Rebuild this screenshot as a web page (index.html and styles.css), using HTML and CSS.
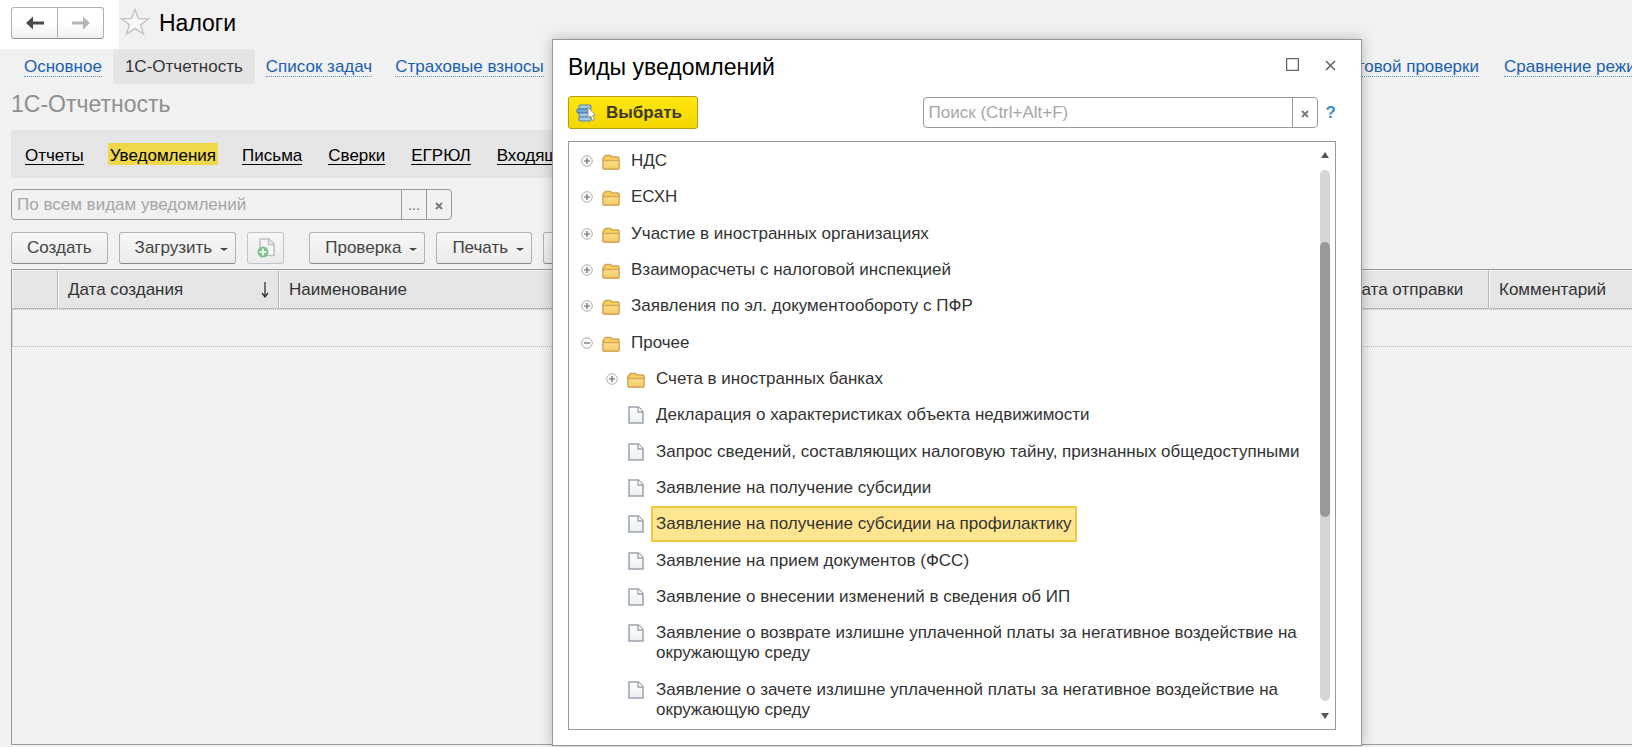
FILE: index.html
```html
<!DOCTYPE html>
<html lang="ru">
    <head>
        <meta charset="UTF-8" />
        <title>Налоги</title>
        <link rel="stylesheet" href="styles.css">
    </head>
    <body>
        <!-- icons -->
        <svg class="sprite" width="0" height="0">
            <defs>
                <linearGradient id="folderFill" x1="0" y1="0" x2="0" y2="1">
                    <stop offset="0" stop-color="#fbe08a" />
                    <stop offset="1" stop-color="#f3cb68" />
                </linearGradient>
                <linearGradient id="fileFill" x1="0" y1="0" x2="0" y2="1">
                    <stop offset="0" stop-color="#ffffff" />
                    <stop offset="1" stop-color="#eceef0" />
                </linearGradient>
            </defs>
            <symbol id="folder" viewBox="0 0 18 16">
                <path d="M1 14V4.500L3.500 1.500H8.500L10 3H16a1 1 0 0 1 1 1V14a1 1 0 0 1-1 1H2a1 1 0 0 1-1-1z" fill="#f8d25c" stroke="#d3a455" stroke-width="1.500" />
                <path d="M1 6.500H17V14a1 1 0 0 1-1 1H2a1 1 0 0 1-1-1z" fill="url(#folderFill)" stroke="#d9a95c" stroke-width="1.300" />
            </symbol>
            <symbol id="file" viewBox="0 0 16 18">
                <path d="M1 1H10.500L15 5.500V17H1z" fill="url(#fileFill)" stroke="#9ba3ad" stroke-width="1.500" />
                <path d="M10 1V6H15" fill="#fff" stroke="#9ba3ad" stroke-width="1.300" />
            </symbol>
            <symbol id="plus" viewBox="0 0 12 12">
                <circle cx="6" cy="6" r="5.300" fill="#fafafa" stroke="#b0b0b0" />
                <path d="M3 6H9M6 3V9" stroke="#666" stroke-width="1.200" />
            </symbol>
            <symbol id="minus" viewBox="0 0 12 12">
                <circle cx="6" cy="6" r="5.300" fill="#fafafa" stroke="#b0b0b0" />
                <path d="M3 6H9" stroke="#666" stroke-width="1.200" />
            </symbol>
            <symbol id="cross" viewBox="0 0 8 8">
                <path d="M1 1L7 7M7 1L1 7" stroke="#777" stroke-width="1.800" />
            </symbol>
        </svg>

        <div class="page">
            <header class="top">
                <div class="history">
                    <button class="history-btn" aria-label="Назад">
                        <svg width="18" height="14" viewBox="0 0 18 14"><path d="M0 7L7 0.500V5.500H18V8.500H7V13.500z" fill="#4a4a4a" /></svg>
                    </button>
                    <button class="history-btn" aria-label="Вперед">
                        <svg width="18" height="14" viewBox="0 0 18 14"><path d="M18 7L11 0.500V5.500H0V8.500H11V13.500z" fill="#b5b5b5" /></svg>
                    </button>
                </div>
                <svg class="star" width="30" height="28" viewBox="0 0 30 28">
                    <path d="M15 1.500L18.400 10.500L28.500 10.800L20.500 16.800L23.500 26L15 20.500L6.500 26L9.500 16.800L1.500 10.800L11.600 10.500z" fill="#f8f8f8" stroke="#c3c6ca" stroke-width="1.500" />
                </svg>
                <h1 class="title">Налоги</h1>
            </header>

            <nav class="sections">
                <a href="#" class="section">Основное</a>
                <a href="#" class="section active">1С-Отчетность</a>
                <a href="#" class="section">Список задач</a>
                <a href="#" class="section">Страховые взносы</a>
                <a href="#" class="section push">Риски налоговой проверки</a>
                <a href="#" class="section last">Сравнение режимов</a>
            </nav>

            <main class="content">
                <h2 class="subtitle">1С-Отчетность</h2>

                <nav class="tabs">
                    <a href="#" class="tab">Отчеты</a>
                    <a href="#" class="tab active">Уведомления</a>
                    <a href="#" class="tab">Письма</a>
                    <a href="#" class="tab">Сверки</a>
                    <a href="#" class="tab">ЕГРЮЛ</a>
                    <a href="#" class="tab">Входящие</a>
                </nav>

                <div class="field filter">
                    <input type="text" placeholder="По всем видам уведомлений" aria-label="Вид уведомления" />
                    <button aria-label="Выбрать вид">...</button>
                    <button aria-label="Очистить"><svg width="8" height="8"><use href="#cross" /></svg></button>
                </div>

                <div class="toolbar">
                    <button class="btn">Создать</button>
                    <button class="btn drop">Загрузить</button>
                    <button class="btn icon" aria-label="Добавить файл">
                        <svg width="18" height="20" viewBox="0 0 18 20">
                            <path d="M3 1H12L17 6V17.500H3z" fill="#f4f5f7" stroke="#b9c0c9" stroke-width="1.500" />
                            <path d="M11.500 1V6.500H17" fill="none" stroke="#b9c0c9" stroke-width="1.300" />
                            <circle cx="6" cy="14" r="5.500" fill="#82c28a" />
                            <path d="M2.500 14H9.500M6 10.500V17.500" stroke="#fff" stroke-width="1.600" />
                        </svg>
                    </button>
                    <button class="btn drop gap">Проверка</button>
                    <button class="btn drop">Печать</button>
                    <button class="btn">Еще</button>
                </div>

                <div class="grid">
                    <table class="list">
                        <thead>
                            <tr>
                                <th class="col-mark"></th>
                                <th class="col-date"><div class="sort">Дата создания
                                    <svg width="8" height="16" viewBox="0 0 8 16"><path d="M4 0V14M1 11L4 15L7 11" fill="none" stroke="#333" stroke-width="1.300" /></svg>
                                </div></th>
                                <th>Наименование</th>
                                <th class="col-sent">Дата отправки</th>
                                <th class="col-comment">Комментарий</th>
                            </tr>
                        </thead>
                        <tbody>
                            <tr><td colspan="5"></td></tr>
                        </tbody>
                    </table>
                </div>
            </main>
        </div>

        <section class="dialog" role="dialog" aria-labelledby="dialogTitle">
            <div class="dialog-head">
                <h2 class="title" id="dialogTitle">Виды уведомлений</h2>
                <div class="window-btns">
                    <button aria-label="Развернуть"><svg width="13" height="13" viewBox="0 0 13 13"><rect x="0.500" y="0.500" width="12" height="12" fill="none" stroke="#666" stroke-width="1.500" /></svg></button>
                    <button aria-label="Закрыть"><svg width="11" height="11" viewBox="0 0 11 11"><path d="M1 1L10 10M10 1L1 10" stroke="#666" stroke-width="1.600" /></svg></button>
                </div>
            </div>

            <div class="dialog-bar">
                <button class="btn choose">
                    <svg width="20" height="18" viewBox="0 0 20 18">
                        <rect x="3" y="1" width="12" height="4" rx="1" fill="#a9cbe8" stroke="#4f83b3" />
                        <rect x="1" y="5" width="14" height="4" rx="1" fill="#6fa6d6" stroke="#3f76ab" />
                        <rect x="3" y="9" width="12" height="4" rx="1" fill="#a9cbe8" stroke="#4f83b3" />
                        <rect x="3" y="13" width="12" height="4" rx="1" fill="#a9cbe8" stroke="#4f83b3" />
                        <path d="M12 3V14L14.500 12L16.500 16.500L18.500 15.500L16.500 11.500H19.500z" fill="#fff" stroke="#8a8a70" stroke-width="0.800" />
                    </svg>
                    Выбрать
                </button>
                <div class="field search">
                    <input type="text" placeholder="Поиск (Ctrl+Alt+F)" aria-label="Поиск" />
                    <button aria-label="Очистить поиск"><svg width="8" height="8"><use href="#cross" /></svg></button>
                </div>
                <a href="#" class="help">?</a>
            </div>

            <div class="tree">
                <ul class="nodes">
                    <li><div class="node"><svg class="toggle"><use href="#plus" /></svg><svg class="folder"><use href="#folder" /></svg><span class="label">НДС</span></div></li>
                    <li><div class="node"><svg class="toggle"><use href="#plus" /></svg><svg class="folder"><use href="#folder" /></svg><span class="label">ЕСХН</span></div></li>
                    <li><div class="node"><svg class="toggle"><use href="#plus" /></svg><svg class="folder"><use href="#folder" /></svg><span class="label">Участие в иностранных организациях</span></div></li>
                    <li><div class="node"><svg class="toggle"><use href="#plus" /></svg><svg class="folder"><use href="#folder" /></svg><span class="label">Взаиморасчеты с налоговой инспекцией</span></div></li>
                    <li><div class="node"><svg class="toggle"><use href="#plus" /></svg><svg class="folder"><use href="#folder" /></svg><span class="label">Заявления по эл. документообороту с ПФР</span></div></li>
                    <li>
                        <div class="node"><svg class="toggle"><use href="#minus" /></svg><svg class="folder"><use href="#folder" /></svg><span class="label">Прочее</span></div>
                        <ul class="children">
                            <li><div class="node"><svg class="toggle"><use href="#plus" /></svg><svg class="folder"><use href="#folder" /></svg><span class="label">Счета в иностранных банках</span></div></li>
                            <li><div class="node leaf"><svg class="file"><use href="#file" /></svg><span class="label">Декларация о характеристиках объекта недвижимости</span></div></li>
                            <li><div class="node leaf"><svg class="file"><use href="#file" /></svg><span class="label">Запрос сведений, составляющих налоговую тайну, признанных общедоступными</span></div></li>
                            <li><div class="node leaf"><svg class="file"><use href="#file" /></svg><span class="label">Заявление на получение субсидии</span></div></li>
                            <li><div class="node leaf selected"><svg class="file"><use href="#file" /></svg><span class="label">Заявление на получение субсидии на профилактику</span></div></li>
                            <li><div class="node leaf"><svg class="file"><use href="#file" /></svg><span class="label">Заявление на прием документов (ФСС)</span></div></li>
                            <li><div class="node leaf"><svg class="file"><use href="#file" /></svg><span class="label">Заявление о внесении изменений в сведения об ИП</span></div></li>
                            <li><div class="node leaf"><svg class="file"><use href="#file" /></svg><span class="label">Заявление о возврате излишне уплаченной платы за негативное воздействие на окружающую среду</span></div></li>
                            <li><div class="node leaf"><svg class="file"><use href="#file" /></svg><span class="label">Заявление о зачете излишне уплаченной платы за негативное воздействие на окружающую среду</span></div></li>
                        </ul>
                    </li>
                </ul>
                <div class="scroll">
                    <svg width="8" height="6" viewBox="0 0 8 6"><path d="M4 0L8 6H0z" fill="#555" /></svg>
                    <div class="track"><div class="thumb"></div></div>
                    <svg width="8" height="6" viewBox="0 0 8 6"><path d="M4 6L8 0H0z" fill="#555" /></svg>
                </div>
            </div>
        </section>
    </body>
</html>
```

FILE: styles.css
```css
* {
    box-sizing: border-box;
}
body {
    margin: 0;
    height: 100vh;
    overflow: hidden;
    background-color: #f1f1f1;
    color: #333;
    font-family: "Liberation Sans", Arial, sans-serif;
    font-size: 17px;
    line-height: 20px;
}
button,
input {
    font: inherit;
    color: inherit;
}
button {
    padding: 0;
    border: none;
    background: none;
}
ul {
    margin: 0;
    padding: 0;
    list-style: none;
}
.sprite {
    position: absolute;
}
.page {
    display: flex;
    flex-direction: column;
    height: 100vh;
    padding-bottom: 2px;
}

/* top line */
.top {
    display: flex;
    height: 49px;
}
.history {
    display: flex;
    width: 119px;
    padding: 7px 15px 10px 11px;
    background-color: #fff;
}
.history-btn {
    display: flex;
    flex: 1;
    align-items: center;
    justify-content: center;
    border: 1px solid #b0b0b0;
    border-bottom-color: #8f8f8f;
    border-radius: 3px 0 0 3px;
    background: linear-gradient(#fff 50%, #f0f0f0);
}
.history-btn + .history-btn {
    border-left: none;
    border-radius: 0 3px 3px 0;
}
.star {
    margin: 8px 9px 0 1px;
}
.title {
    margin: 0;
    color: #000;
    font-size: 23px;
    font-weight: normal;
    line-height: 28px;
}
.top .title {
    padding-top: 9px;
}

/* sections */
.sections {
    display: flex;
    height: 35px;
    padding-left: 24px;
    white-space: nowrap;
}
.section {
    align-self: center;
    margin-right: 23px;
    border-bottom: 1px dotted #5b93cf;
    color: #1a5fb4;
    line-height: 19px;
    text-decoration: none;
}
.section.active {
    align-self: stretch;
    margin: 0 11px 0 -12px;
    padding: 0 12px;
    border: none;
    border-radius: 4px;
    background-color: #e4e4e4;
    color: #333;
    line-height: 35px;
}
.section.push {
    margin-left: auto;
    margin-right: 25px;
}
.section.last {
    width: 128px;
    margin-right: 0;
}

/* content */
.content {
    display: flex;
    flex: 1;
    flex-direction: column;
    padding-left: 11px;
}
.subtitle {
    margin: 6px 0 12px;
    color: #8f8f8f;
    font-size: 23px;
    font-weight: normal;
    line-height: 28px;
}
.tabs {
    display: flex;
    gap: 26px;
    align-items: center;
    width: 1200px;
    height: 48px;
    padding-left: 14px;
    background-color: #e5e5e5;
}
.tab {
    padding-top: 3px;
    border-bottom: 1px solid #000;
    color: #000;
    line-height: 17px;
    text-decoration: none;
}
.tab.active {
    margin: 0 -2px;
    padding: 3px 2px 0;
    border: none;
    background-color: #efd84a;
    line-height: 19px;
}

.field {
    display: flex;
    height: 31px;
    border: 1px solid #999;
    border-radius: 4px;
}
.field input {
    flex: 1;
    min-width: 0;
    padding: 0 5px;
    border: none;
    background: none;
    outline: none;
}
.field input::placeholder {
    color: #a6a6a6;
    opacity: 1;
}
.field button {
    width: 25px;
    border-left: 1px solid #999;
    color: #666;
    font-size: 14px;
}
.filter {
    width: 441px;
    margin-top: 11px;
}

.toolbar {
    display: flex;
    gap: 11px;
    margin: 12px 0 5px;
}
.btn {
    height: 32px;
    padding: 0 15px;
    border: 1px solid #b3b3b3;
    border-bottom-color: #8c8c8c;
    border-radius: 3px;
    background: linear-gradient(#f7f7f7, #ebebeb);
    color: #444;
}
.btn.drop {
    padding-right: 7px;
}
.btn.drop::after {
    content: "";
    display: inline-block;
    margin-left: 8px;
    border: 4px solid transparent;
    border-top: 3px solid #444;
    border-bottom: none;
    vertical-align: 2px;
}
.btn.icon {
    display: flex;
    align-items: center;
    justify-content: center;
    width: 37px;
    padding: 0;
    border-color: #c4c4c4;
}
.btn.gap {
    margin-left: 14px;
}

.grid {
    flex: 1;
    border: 1px solid #999;
    border-right: none;
}
.list {
    width: 100%;
    border-collapse: separate;
    border-spacing: 0;
    table-layout: fixed;
}
.list th {
    height: 39px;
    padding: 0 9px;
    border: 1px solid #f4f4f4;
    border-right-color: #b8b8b8;
    border-bottom-color: #b8b8b8;
    background-color: #e5e5e5;
    font-weight: normal;
    text-align: left;
}
.list th:last-child {
    border-right: none;
}
.list td {
    height: 38px;
    border: 1px dotted #bbb;
    border-right: none;
}
.list .col-mark {
    width: 46px;
}
.list .col-date {
    width: 221px;
}
.list .col-sent {
    width: 149px;
}
.list .col-comment {
    width: 143px;
}
.sort {
    display: flex;
    align-items: center;
    justify-content: space-between;
}

/* dialog window over the page */
.dialog {
    position: absolute;
    top: 39px;
    bottom: 1px;
    left: 552px;
    right: 270px;
    display: flex;
    flex-direction: column;
    padding: 13px 25px 15px 15px;
    border: 1px solid #999;
    background-color: #fff;
    box-shadow: 0 0 12px rgba(0, 0, 0, 0.25);
}
.dialog-head {
    display: flex;
    align-items: flex-start;
    justify-content: space-between;
}
.window-btns {
    display: flex;
    gap: 26px;
    height: 26px;
}
.dialog-bar {
    display: flex;
    align-items: center;
    margin: 15px 0 12px;
}
.btn.choose {
    display: flex;
    gap: 10px;
    align-items: center;
    height: 33px;
    padding: 0 15px 0 7px;
    border-color: #b39b1c;
    background: linear-gradient(#ffe60f, #f5d600);
    color: #3d3a1c;
    font-weight: bold;
}
.search {
    width: 395px;
    margin-left: auto;
}
.help {
    margin-left: 8px;
    color: #3a8fc9;
    font-weight: bold;
    text-decoration: none;
}

/* tree */
.tree {
    display: flex;
    flex: 1;
    min-height: 0;
    border: 1px solid #999;
}
.nodes {
    flex: 1;
    padding-top: 1px;
    overflow: hidden;
}
.nodes li:nth-child(3n) {
    padding-top: 1px;
}
.node {
    display: flex;
    align-items: flex-start;
    min-height: 36px;
    padding-left: 12px;
}
.children {
    padding-left: 25px;
}
.leaf {
    padding-left: 33px;
}
.toggle {
    width: 12px;
    height: 12px;
    margin: 12px 9px 0 0;
}
.folder {
    width: 18px;
    height: 16px;
    margin-top: 11px;
}
.file {
    width: 16px;
    height: 18px;
    margin: 9px 1px 0;
}
.node svg {
    flex: none;
}
.label {
    margin-left: 6px;
    padding: 8px 5px;
}
.selected .label {
    padding: 6px 3px;
    border: 2px solid #f0c93c;
    background-color: #ffe58f;
}
.scroll {
    display: flex;
    flex-direction: column;
    gap: 12px;
    align-items: center;
    width: 18px;
    padding: 10px 3px 10px 0;
}
.track {
    flex: 1;
    width: 10px;
    padding-top: 72px;
    border-radius: 5px;
    background-color: #d6d6d6;
}
.thumb {
    height: 60%;
    border-radius: 5px;
    background-color: #999;
}
```
